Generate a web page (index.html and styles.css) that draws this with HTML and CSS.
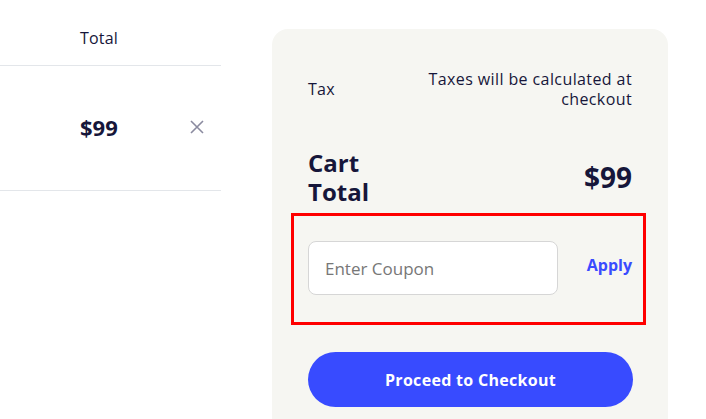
FILE: index.html
```html
<!DOCTYPE html>
<html lang="en">
<head>
<meta charset="utf-8">
<title>Cart</title>
<link rel="stylesheet" href="styles.css">
</head>
<body>
<div class="page">
  <section class="cart-table">
    <div class="table-head">
      <span class="col-total">Total</span>
    </div>
    <div class="table-row">
      <span class="price">$99</span>
      <button class="remove" aria-label="Remove item">
        <svg width="14" height="14" viewBox="0 0 14 14" aria-hidden="true"><path d="M1 1L13 13M13 1L1 13" stroke="#8b8ba0" stroke-width="1.6" fill="none"/></svg>
      </button>
    </div>
  </section>

  <aside class="summary">
    <div class="tax-row">
      <span class="tax-label">Tax</span>
      <span class="tax-note">Taxes will be calculated at checkout</span>
    </div>
    <div class="total-row">
      <span class="total-label">Cart Total</span>
      <span class="total-value">$99</span>
    </div>
    <div class="coupon">
      <input class="coupon-input" type="text" placeholder="Enter Coupon">
      <a class="apply" href="#">Apply</a>
      <div class="highlight"></div>
    </div>
    <button class="checkout">Proceed to Checkout</button>
  </aside>
</div>
</body>
</html>
```

FILE: styles.css
```css
* { box-sizing: border-box; }

html, body {
  margin: 0;
  padding: 0;
  background: #ffffff;
}

body {
  font-family: "Open Sans", "Liberation Sans", sans-serif;
  color: #16163a;
  width: 706px;
  height: 419px;
  overflow: hidden;
}

.page {
  display: flex;
  align-items: flex-start;
  gap: 51px;
}

.cart-table {
  width: 221px;
  flex: none;
}

.table-head {
  height: 66px;
  border-bottom: 1px solid #e3e6ea;
  display: flex;
  align-items: flex-end;
  padding: 0 0 17px 80px;
}

.col-total {
  font-size: 16px;
  line-height: 20px;
  letter-spacing: 0.2px;
  font-weight: 500;
}

.table-row {
  height: 125px;
  border-bottom: 1px solid #e3e6ea;
  display: flex;
  align-items: center;
  padding-left: 80px;
  padding-bottom: 3px;
}

.price {
  font-size: 22px;
  font-weight: 700;
  width: 110px;
}

.remove {
  border: 0;
  background: none;
  padding: 0;
  width: 14px;
  height: 14px;
  display: flex;
  cursor: pointer;
}

.summary {
  width: 396px;
  flex: none;
  margin-top: 29px;
  background: #f6f6f2;
  border-radius: 16px;
  padding: 40px 36px 40px 36px;
}

.tax-row {
  display: flex;
  justify-content: space-between;
  align-items: center;
  gap: 40px;
}

.tax-label {
  font-size: 16px;
  line-height: 20px;
  letter-spacing: 0.3px;
  font-weight: 500;
}

.tax-note {
  font-size: 16px;
  line-height: 20px;
  letter-spacing: 0.4px;
  font-weight: 500;
  text-align: right;
  width: 214px;
}

.total-row {
  display: flex;
  justify-content: space-between;
  align-items: center;
  margin-top: 39px;
}

.total-label {
  font-size: 24px;
  line-height: 29px;
  font-weight: 700;
  width: 70px;
}

.total-value {
  font-size: 28px;
  font-weight: 700;
  line-height: 34px;
}

.coupon {
  position: relative;
  margin-top: 7px;
  padding: 28px 0 30px 0;
  display: flex;
  align-items: center;
  justify-content: space-between;
}

.coupon-input {
  width: 250px;
  height: 54px;
  border: 1px solid #d6d6d6;
  border-radius: 8px;
  background: #ffffff;
  padding: 0 16px;
  font-family: inherit;
  font-size: 17px;
  color: #16163a;
  outline: none;
}

.coupon-input::placeholder {
  color: #777777;
}

.apply {
  font-size: 16px;
  font-weight: 700;
  color: #3a4bff;
  text-decoration: none;
  margin-top: -6px;
}

.highlight {
  position: absolute;
  top: 0;
  bottom: 0;
  left: -17px;
  right: -14px;
  border: 3px solid #ff0000;
  pointer-events: none;
}

.checkout {
  display: block;
  width: 325px;
  height: 55px;
  margin-top: 27px;
  border: 0;
  border-radius: 28px;
  background: #384bff;
  color: #ffffff;
  font-family: inherit;
  font-size: 16px;
  letter-spacing: 0.3px;
  font-weight: 700;
  cursor: pointer;
}
```
